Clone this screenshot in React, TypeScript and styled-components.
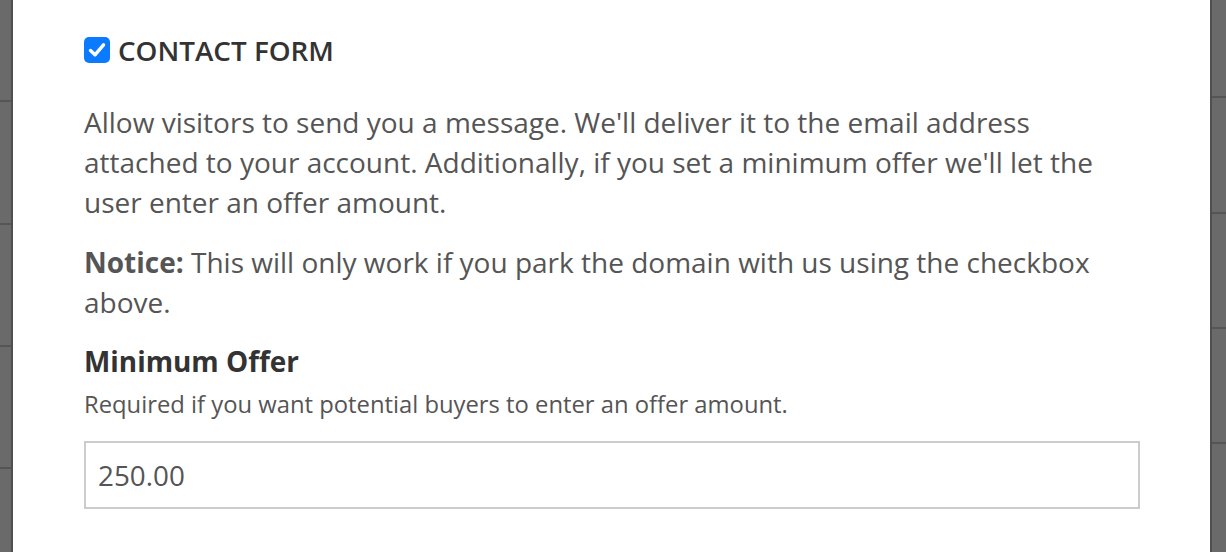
import React from "react";
import styled, { createGlobalStyle } from "styled-components";

const Global = createGlobalStyle`
  html, body { margin: 0; padding: 0; background: #fff; }
  body { font-family: "Open Sans", "Noto Sans", sans-serif; -webkit-font-smoothing: antialiased; }
  * { box-sizing: border-box; }
`;

const Page = styled.div`
  display: flex;
  height: 552px;
  width: 1226px;
  overflow: hidden;
`;

const Backdrop = styled.div<{ $w: number; $period: number; $offset: number; $edge: "left" | "right" }>`
  width: ${(p) => p.$w}px;
  flex: none;
  background:
    linear-gradient(to ${(p) => (p.$edge === "left" ? "left" : "right")}, #4f4f4f 0, #4f4f4f 2px, transparent 2px),
    repeating-linear-gradient(
      to bottom,
      transparent 0,
      transparent ${(p) => p.$period - 2}px,
      #555 ${(p) => p.$period - 2}px,
      #555 ${(p) => p.$period}px
    ) 0 ${(p) => p.$offset}px,
    #6a6a6a;
`;

const Modal = styled.div`
  flex: 1;
  background: #fff;
  padding: 36px 70px 0 71px;
  display: flex;
  flex-direction: column;
`;

const CheckRow = styled.label`
  display: flex;
  align-items: center;
  gap: 8px;
  height: 28px;
`;

const CheckBox = styled.span`
  width: 26px;
  height: 26px;
  border-radius: 5px;
  background: #0a7bff;
  display: flex;
  align-items: center;
  justify-content: center;
`;

const CheckTitle = styled.span`
  font-size: 27.8px;
  font-weight: 600;
  color: #333;
`;

const Para = styled.p<{ $mt: number }>`
  margin: ${(p) => p.$mt}px 0 0;
  font-size: 28px;
  line-height: 40px;
  color: #555;
  max-width: 1040px;
`;

const Strong = styled.strong`
  font-weight: 700;
`;

const FieldLabel = styled.div`
  margin-top: 21px;
  font-size: 27.9px;
  line-height: 36px;
  font-weight: 700;
  color: #333;
`;

const Help = styled.div`
  margin-top: 8px;
  font-size: 23.8px;
  line-height: 34px;
  color: #555;
`;

const Input = styled.input`
  margin-top: 20px;
  width: 1056px;
  height: 68px;
  border: 2px solid #ccc;
  border-radius: 0;
  padding: 0 12px;
  font-family: "Open Sans", "Noto Sans", sans-serif;
  font-size: 27.8px;
  color: #555;
  background: #fff;
  outline: none;
`;

export default function App() {
  return (
    <>
      <Global />
      <Page>
        <Backdrop $w={13} $period={122.3} $offset={-20} $edge="left" />
        <Modal>
          <CheckRow>
            <CheckBox>
              <svg width="20" height="20" viewBox="0 0 20 20">
                <path d="M3.5 10.5 L8 14.8 L16.5 4.8" fill="none" stroke="#fff" strokeWidth="3.4" strokeLinecap="round" strokeLinejoin="round" />
              </svg>
            </CheckBox>
            <CheckTitle>CONTACT FORM</CheckTitle>
          </CheckRow>
          <Para $mt={38}>
            Allow visitors to send you a message. We'll deliver it to the email address attached to your account. Additionally, if you set a minimum offer we'll let the user enter an offer amount.
          </Para>
          <Para $mt={20}>
            <Strong>Notice:</Strong> This will only work if you park the domain with us using the checkbox above.
          </Para>
          <FieldLabel>Minimum Offer</FieldLabel>
          <Help>Required if you want potential buyers to enter an offer amount.</Help>
          <Input defaultValue="250.00" />
        </Modal>
        <Backdrop $w={16} $period={115.3} $offset={-17} $edge="right" />
      </Page>
    </>
  );
}
